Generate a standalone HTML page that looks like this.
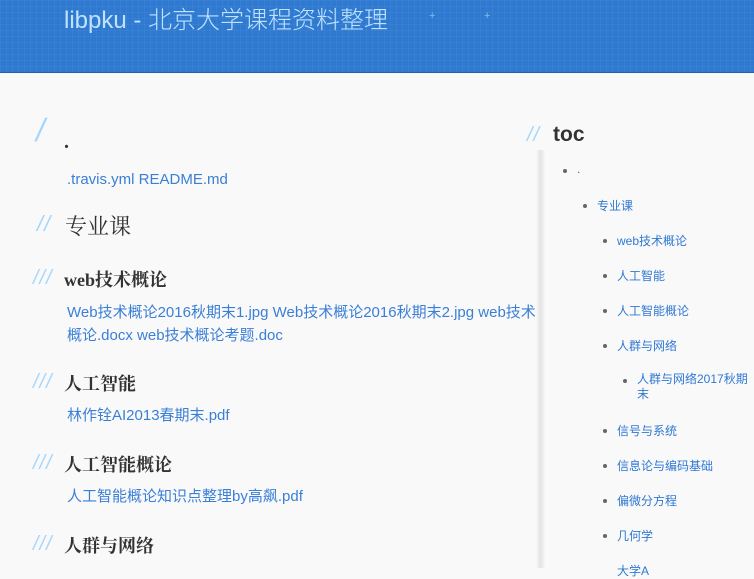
<!DOCTYPE html>
<html><head><meta charset="utf-8"><style>
*{margin:0;padding:0;box-sizing:border-box}
body{width:754px;height:568px;overflow:hidden;background:#f9f9fa;font-family:"Liberation Sans","Noto Sans CJK SC",sans-serif;position:relative}
#hd{position:absolute;left:0;top:0;width:754px;height:73px;background:#2f7ad0;border-bottom:1px solid #2562aa;
background-image:linear-gradient(rgba(255,255,255,.04) 1px,transparent 1px),linear-gradient(90deg,rgba(255,255,255,.04) 1px,transparent 1px);background-size:6px 6px}
#hd .t{position:absolute;left:64px;top:0px;font-size:24px;color:#bfe3ff;font-family:"Liberation Sans","Noto Sans CJK SC",sans-serif;font-weight:300}
.p{position:absolute;color:#8ab8ea;font-size:11px}
.a{position:absolute;color:#3a7fd6;font-size:15px;line-height:23px}
.h{position:absolute;color:#333;font-family:"Liberation Serif","Noto Serif CJK SC",serif;font-weight:bold}
.s{position:absolute;color:#a6d6fb;font-style:italic;font-family:"Liberation Sans",sans-serif;letter-spacing:1px}
#sb{position:absolute;left:537px;top:150px;width:8px;height:418px;background:linear-gradient(90deg,#f3f3f3,#e4e4e4 40%,#f6f6f6)}
.ti{position:absolute;font-size:12px;color:#2f78d2}
.b{position:absolute;width:4px;height:4px;border-radius:50%;background:#666}
</style></head><body>
<div id="hd"><div class="t">libpku - 北京大学课程资料整理</div>
<span class="p" style="left:319px;top:10px">+</span><span class="p" style="left:374px;top:10px">+</span><span class="p" style="left:429px;top:10px">+</span><span class="p" style="left:484px;top:10px">+</span></div>

<div class="s" style="left:36px;top:112px;font-size:32px">/</div>
<div class="h" style="left:64px;top:131px;font-size:20px">.</div>
<div class="a" style="left:67px;top:168px">.travis.yml README.md</div>

<div class="s" style="left:37px;top:211px;font-size:22px">//</div>
<div class="h" style="left:65px;top:210px;font-size:22px;font-weight:normal;font-family:'Noto Serif CJK SC',serif">专业课</div>

<div class="s" style="left:33px;top:267px;font-size:20px">///</div>
<div class="h" style="left:64px;top:266px;font-size:18px">web技术概论</div>
<div class="a" style="left:67px;top:301px;width:474px">Web技术概论2016秋期末1.jpg Web技术概论2016秋期末2.jpg web技术概论.docx web技术概论考题.doc</div>

<div class="s" style="left:33px;top:371px;font-size:20px">///</div>
<div class="h" style="left:64px;top:370px;font-size:18px">人工智能</div>
<div class="a" style="left:67px;top:404px">林作铨AI2013春期末.pdf</div>

<div class="s" style="left:33px;top:452px;font-size:20px">///</div>
<div class="h" style="left:64px;top:451px;font-size:18px">人工智能概论</div>
<div class="a" style="left:67px;top:485px">人工智能概论知识点整理by高飙.pdf</div>

<div class="s" style="left:33px;top:533px;font-size:20px">///</div>
<div class="h" style="left:64px;top:532px;font-size:18px">人群与网络</div>

<div id="sb"></div>
<div class="s" style="left:527px;top:124px;font-size:20px">//</div>
<div class="h" style="left:553px;top:123px;font-size:21px;font-family:'Liberation Sans',sans-serif">toc</div>

<div class="b" style="left:563px;top:169px"></div><div class="ti" style="left:577px;top:162px">.</div>
<div class="b" style="left:583px;top:204px"></div><div class="ti" style="left:597px;top:197px">专业课</div>
<div class="b" style="left:603px;top:239px"></div><div class="ti" style="left:617px;top:232px">web技术概论</div>
<div class="b" style="left:603px;top:274px"></div><div class="ti" style="left:617px;top:267px">人工智能</div>
<div class="b" style="left:603px;top:309px"></div><div class="ti" style="left:617px;top:302px">人工智能概论</div>
<div class="b" style="left:603px;top:344px"></div><div class="ti" style="left:617px;top:337px">人群与网络</div>
<div class="b" style="left:623px;top:379px"></div><div class="ti" style="left:637px;top:372px;width:115px;line-height:15px">人群与网络2017秋期末</div>
<div class="b" style="left:603px;top:429px"></div><div class="ti" style="left:617px;top:422px">信号与系统</div>
<div class="b" style="left:603px;top:464px"></div><div class="ti" style="left:617px;top:457px">信息论与编码基础</div>
<div class="b" style="left:603px;top:499px"></div><div class="ti" style="left:617px;top:492px">偏微分方程</div>
<div class="b" style="left:603px;top:534px"></div><div class="ti" style="left:617px;top:527px">几何学</div>
<div class="ti" style="left:617px;top:562px">大学A</div>
</body></html>
